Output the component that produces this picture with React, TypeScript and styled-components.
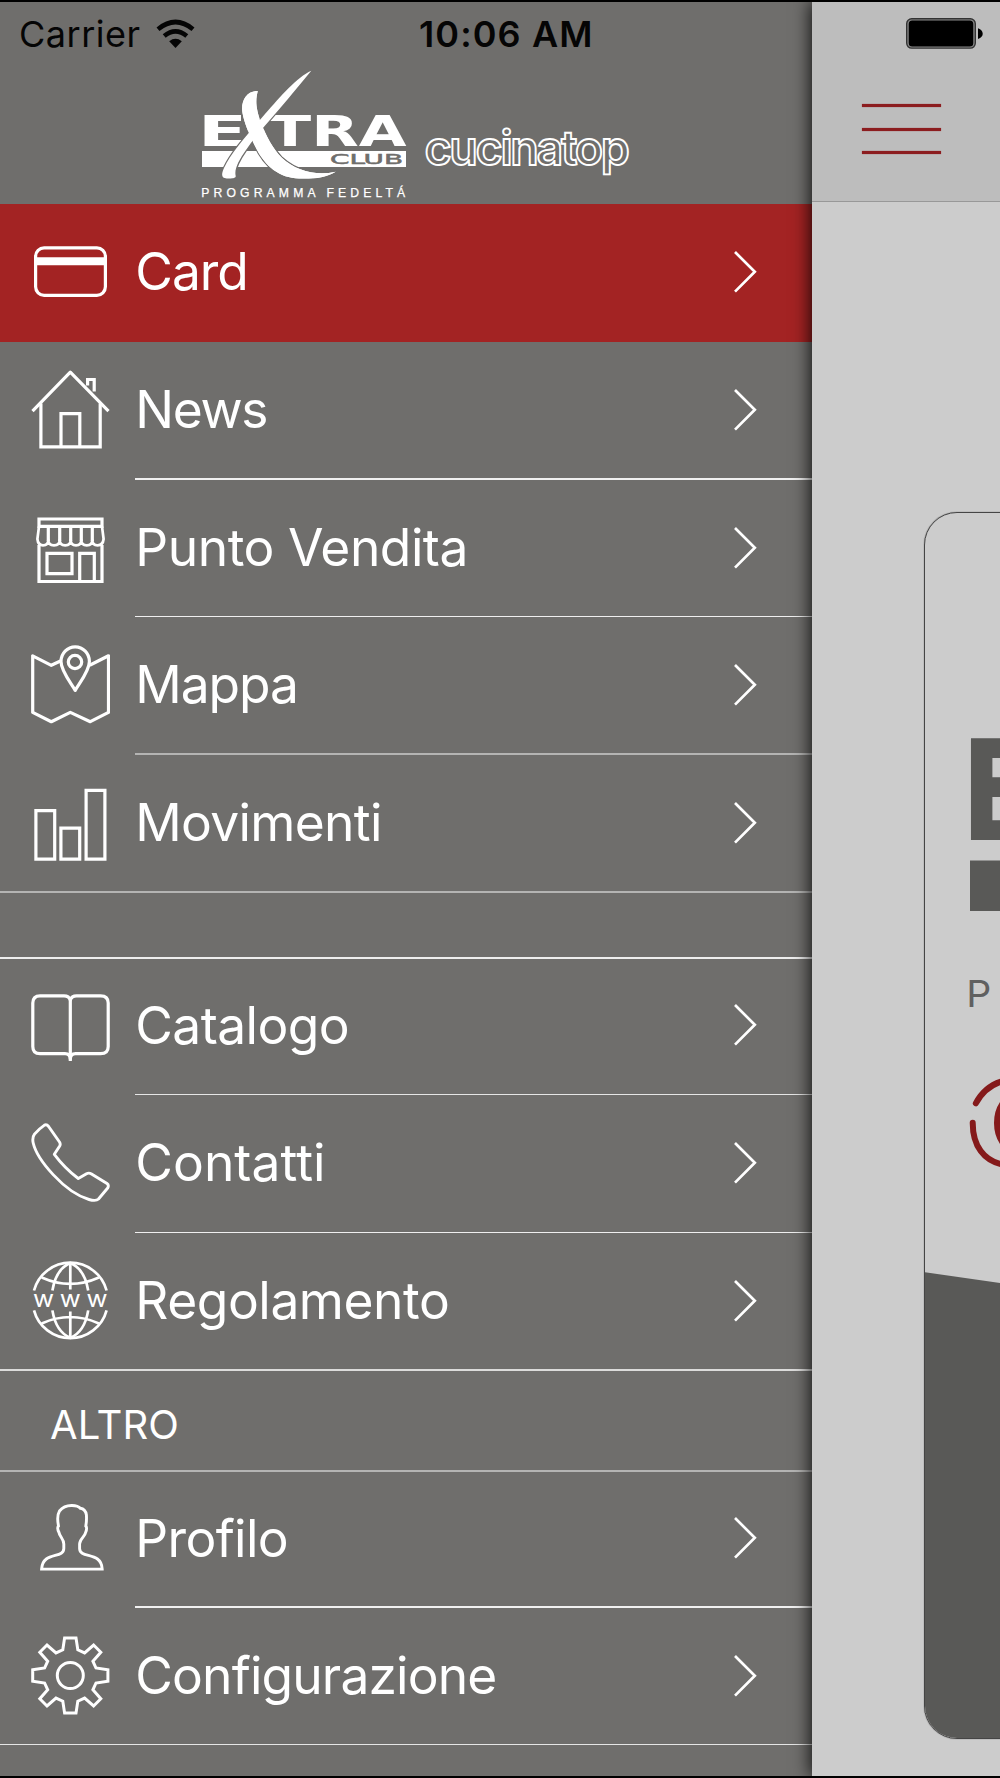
import React from "react";
import styled, { createGlobalStyle } from "styled-components";

const GREY = "#6f6e6c";
const FONT = `Inter, "Liberation Sans", sans-serif`;

const GlobalStyle = createGlobalStyle`
  body { margin: 0; background: #000; }
  #root { height: 1778px; }
  * { box-sizing: border-box; }
`;

const Screen = styled.main`
  display: flex;
  width: 1000px;
  height: 1778px;
  padding: 2px 0 2px;
  overflow: hidden;
  background: #000;
  font-family: ${FONT};
`;

const Drawer = styled.nav`
  display: flex;
  flex-direction: column;
  flex: 0 0 812px;
  background: ${GREY};
  color: #fff;
`;

const DrawerHeader = styled.header`
  display: flex;
  flex-direction: column;
  height: 202px;
`;

const StatusBar = styled.div`
  display: flex;
  align-items: center;
  height: 64px;
  padding-left: 19px;
  color: #050505;
`;

const Carrier = styled.span`
  width: 137px;
  font-size: 36px;
  line-height: 64px;
  letter-spacing: 0.5px;
  white-space: nowrap;
`;

const Clock = styled.span`
  margin-left: 223px;
  font-size: 36px;
  font-weight: 600;
  line-height: 64px;
  letter-spacing: 1.1px;
  white-space: nowrap;
`;

const Brands = styled.div`
  display: flex;
  gap: 12px;
  padding: 2px 0 0 198px;
`;

const Row = styled.a<{ $height: number; $lead?: boolean; $active?: boolean }>`
  display: flex;
  flex-direction: column;
  justify-content: space-between;
  flex: 0 0 ${(p) => p.$height}px;
  padding-top: ${(p) => (p.$lead ? 26.5 : 28)}px;
  background: ${(p) => (p.$active ? "#a32323" : "transparent")};
`;

const RowContent = styled.div`
  display: flex;
  align-items: center;
  height: 80px;
  padding: 0 52px 0 30px;
`;

const Icon = styled.svg`
  flex: none;
  width: 80px;
  height: 80px;
  margin-right: 25.3px;
  fill: none;
  stroke: #fff;
  stroke-width: 3.2;
  stroke-linejoin: round;
`;

const Chevron = styled.svg`
  flex: none;
  width: 28px;
  height: 45px;
  padding-bottom: 1px;
  fill: none;
  stroke: #fff;
  stroke-width: 2.7;
`;

const Label = styled.span<{ $tracking: number }>`
  flex: 1;
  padding-bottom: 2px;
  font-size: 51.5px;
  line-height: 80px;
  letter-spacing: ${(p) => p.$tracking}px;
  white-space: nowrap;
`;

const Rule = styled.div<{ $weight: number; $tone: string; $inset?: boolean }>`
  height: ${(p) => p.$weight}px;
  margin-left: ${(p) => (p.$inset ? 134.5 : 0)}px;
  background: ${(p) => p.$tone};
`;

const Spacer = styled.div`
  display: flex;
  flex-direction: column;
  justify-content: flex-end;
  flex: 0 0 66px;
`;

const Section = styled.div`
  display: flex;
  flex-direction: column;
  justify-content: space-between;
  flex: 0 0 101px;
`;

const SectionTitle = styled.h2`
  margin: 0;
  padding: 14px 0 0 50px;
  font-size: 40px;
  font-weight: 400;
  line-height: 80px;
  letter-spacing: 0.1px;
`;

const Page = styled.section`
  display: flex;
  flex-direction: column;
  flex: 0 0 188px;
  min-width: 0;
  z-index: 1;
  overflow: hidden;
  background: #ccc;
  box-shadow: -2px 0 16px rgba(0, 0, 0, 0.82);
`;

const PageHeader = styled.header`
  display: flex;
  flex-direction: column;
  gap: 54px;
  flex: 0 0 200px;
  padding: 15px 0 0 50px;
  background: #bdbdbd;
  border-bottom: 1px solid #989898;
`;

const Battery = styled.svg`
  margin-left: 43px;
  width: 80px;
  height: 33px;
`;

const Burger = styled.button`
  display: flex;
  flex-direction: column;
  gap: 20.5px;
  width: 78.5px;
  padding: 0;
  border: 0;
  background: none;
`;

const BurgerLine = styled.span`
  height: 3px;
  background: #8c1d1f;
  box-shadow: 0 0 1px #8c1d1f;
`;

const LoyaltyCard = styled.article`
  width: 760px;
  height: 1227px;
  margin: 310px 0 0 112px;
  overflow: hidden;
  border: 1px solid #454545;
  border-radius: 33px;
  box-shadow: 0 0 1px #333;
`;

const CardArt = styled.svg`
  display: block;
  width: 760px;
  height: 1227px;
`;

const quarter = [
  [-37.6, -5.7], [-25.7, -7.5], [-22.6, -14.3], [-30.5, -23.3],
  [-23.3, -30.5], [-14.3, -22.6], [-7.5, -25.7], [-5.7, -37.6],
];
const gearPoints = [0, 1, 2, 3]
  .flatMap((turn) =>
    quarter.map(([x, y]) => {
      let a = x;
      let b = y;
      for (let i = 0; i < turn; i++) [a, b] = [-b, a];
      return `${40.3 + a},${39.5 + b}`;
    })
  )
  .join(" ");

const icons: Record<string, React.ReactNode> = {
  card: (
    <>
      <rect x="5.6" y="15.9" width="69.8" height="47.4" rx="8.5" />
      <path d="M6 29.2H75" strokeWidth="8" />
    </>
  ),
  house: (
    <>
      <path d="M2.5 41.2L40.3 2.1L78.5 41.2" />
      <path d="M10.9 33.5V76.8H70.2V33.5M31 76.8V43.7H49.8V76.8" strokeLinejoin="miter" />
      <path d="M57.6 15.5V9.5H64.2V21.5" strokeLinejoin="miter" />
    </>
  ),
  store: (
    <>
      <path d="M9 37V73.5H72V37M9 20V11H72V20M9 18.3H72" strokeLinejoin="miter" />
      <path d="M9 18.5L7.4 31Q8 37.3 13 37.3Q18.3 37.3 18.3 32Q18.3 37.3 24 37.3Q29.7 37.3 29.7 32Q29.7 37.3 35.2 37.3Q40.7 37.3 40.7 32Q40.7 37.3 46 37.3Q51.3 37.3 51.3 32Q51.3 37.3 56.8 37.3Q62.3 37.3 62.3 32Q62.3 37.3 67.6 37.3Q73 37.3 73.6 31L72 18.5" strokeWidth="2.7" />
      <path d="M18.3 18V33M29.7 18V33M40.7 18V33M51.3 18V33M62.3 18V33" />
      <path d="M17 45.3H42V65.6H17ZM49.7 73V45.3H64.3V73" strokeLinejoin="miter" />
    </>
  ),
  map: (
    <>
      <path d="M31 15.7L21.3 20.3L2.7 10.8V67.4L21.3 76.7L40.3 67.4L60.3 76.7L78.5 67.4V10.8L59.7 20.3" />
      <path d="M45.2 45.4C41 38 31 26 31 16.5A14.2 14.6 0 0 1 59.4 16.5C59.4 26 49.5 38 45.2 45.4Z" />
      <circle cx="45" cy="17" r="6.7" />
    </>
  ),
  bars: (
    <path
      d="M5.9 27.7H24.7V76.1H5.9ZM30.9 45.1H49.7V76.1H30.9ZM56.1 7.3H74.9V76.1H56.1Z"
      strokeLinejoin="miter"
    />
  ),
  book: (
    <>
      <path d="M40.3 14Q39 9.8 34 9.8H10Q2.8 9.8 2.8 17V60.4Q2.8 67.6 10 67.6H35Q40.3 67.6 40.3 73Q40.3 67.6 45.6 67.6H70.6Q78.2 67.6 78.2 60.4V17Q78.2 9.8 70.6 9.8H46.6Q41.6 9.8 40.3 14Z" />
      <path d="M40.3 12V75" />
    </>
  ),
  phone: (
    <path d="M14.5 2.1Q16.6 1 18.6 3.5L29.5 19Q30.8 21 29.7 23L24.3 31.3Q34.5 45 48.3 55.5L56.5 50.7Q59 49.4 61.5 51L77 60.5Q79.2 62 77.7 65L68.5 76Q66 78.5 59 76.5C34 69 7 36.5 3.2 20Q2 14.5 4.5 11.2Q8.5 6.2 14.5 2.1Z" strokeWidth="2.9" />
  ),
  globe: (
    <>
      <path d="M4 29.5A37.6 37.6 0 0 1 76.6 29.5M4 49.3A37.6 37.6 0 0 0 76.6 49.3" strokeWidth="2.7" />
      <path d="M22.4 29.5Q26 8 40.3 2Q54.6 8 58.2 29.5M22.4 49.4Q26 71 40.3 76.8Q54.6 71 58.2 49.4" strokeWidth="2.7" />
      <path d="M40.3 2V28.5M40.3 50.4V77M11.7 16.4Q40.3 29.2 68.9 16.4M11.7 62.4Q40.3 49.6 68.9 62.4" strokeWidth="2.7" />
      {[13.6, 40.3, 67].map((x) => (
        <text key={x} x={x - 10.5} y="46" textLength="21" lengthAdjust="spacingAndGlyphs" fill="#fff" stroke="none" fontSize="23.5" fontWeight="400">w</text>
      ))}
    </>
  ),
  person: (
    <path d="M11.6 70.1C12.5 52 33.8 60 33.8 49.5V45C33.8 40 29.5 37.5 29 33.5Q26.7 29 28.5 27Q26.5 17 29.5 12Q34 6.3 42 6.5Q48 6.6 50.3 9.3Q55.5 10 56.4 16Q56.8 22 55.8 27Q57.5 29 55.6 33.5C55 37.5 49.6 40 49.6 45V49.5C49.6 60 71.5 52 72.2 70.1Z" strokeLinejoin="miter" strokeWidth="2.9" />
  ),
  gear: (
    <>
      <polygon points={gearPoints} strokeLinejoin="miter" strokeWidth="3" />
      <circle cx="40.3" cy="39.5" r="13" strokeWidth="3" />
    </>
  ),
};

type Item = {
  icon: string;
  label: string;
  height: number;
  tracking: number;
  weight: number;
  tone?: string;
  full?: boolean;
  lead?: boolean;
  active?: boolean;
};

const mainItems: Item[] = [
  { icon: "card", label: "Card", height: 138, tracking: -1, weight: 0, active: true },
  { icon: "house", label: "News", height: 138, tracking: -1.4, weight: 2, tone: "#f0f0f0" },
  { icon: "store", label: "Punto Vendita", height: 137, tracking: -0.48, weight: 1, tone: "#efefef" },
  { icon: "map", label: "Mappa", height: 138, tracking: -1.1, weight: 2, tone: "#b4b4b3" },
  { icon: "bars", label: "Movimenti", height: 138, tracking: -0.7, weight: 2, tone: "#b4b4b3", full: true },
];
const infoItems: Item[] = [
  { icon: "book", label: "Catalogo", height: 136, tracking: -0.58, weight: 1, tone: "#e6e6e6", lead: true },
  { icon: "phone", label: "Contatti", height: 138, tracking: 0.05, weight: 1, tone: "#efefef" },
  { icon: "globe", label: "Regolamento", height: 138, tracking: -0.45, weight: 2, tone: "#dcdcdb", full: true },
];
const otherItems: Item[] = [
  { icon: "person", label: "Profilo", height: 136, tracking: -0.65, weight: 2, tone: "#f0f0f0", lead: true },
  { icon: "gear", label: "Configurazione", height: 137, tracking: -0.85, weight: 1, tone: "#e6e6e6", full: true },
];

const MenuRow = ({ item }: { item: Item }) => (
  <Row $height={item.height} $lead={item.lead} $active={item.active}>
    <RowContent>
      <Icon viewBox="0 0 80 80">{icons[item.icon]}</Icon>
      <Label $tracking={item.tracking}>{item.label}</Label>
      <Chevron viewBox="0 0 28 44">
        <path d="M3 2L22.8 21.8L3 41.6" />
      </Chevron>
    </RowContent>
    {item.weight > 0 && <Rule $weight={item.weight} $tone={item.tone ?? "#fff"} $inset={!item.full} />}
  </Row>
);

const Wifi = () => (
  <svg width="40" height="30" viewBox="0 0 40 30" fill="none" stroke="#050505" strokeWidth="4.6">
    <path d="M2 10.2Q19.5 -4.2 37 10.2M8.2 17Q19.5 7.6 30.8 17" />
    <path d="M13.2 22.2Q19.5 17.4 25.8 22.2L19.5 29Z" fill="#050505" stroke="none" />
  </svg>
);

const ExtraLogo = () => (
  <svg width="212" height="134" viewBox="198 68 212 134" fill="#fff">
    <g fontFamily="DejaVu Sans" fontWeight="700" fontSize="43">
      <text x="198" y="145.7" textLength="49" lengthAdjust="spacingAndGlyphs">E</text>
      <text x="269" y="145.7" textLength="137.5" lengthAdjust="spacingAndGlyphs">TRA</text>
    </g>
    <rect x="202" y="151" width="204" height="16" />
    <text x="330" y="164.4" textLength="73" lengthAdjust="spacingAndGlyphs" fill={GREY} stroke={GREY} strokeWidth="0.5" fontFamily="DejaVu Sans" fontSize="14">CLUB</text>
    <g stroke={GREY} strokeWidth="2.4" paintOrder="stroke">
      <path d="M257.7 91C246 91 240.5 102 242.5 113C244 122 249 134 255 146C265 167 280 178 299 178.5C312 179 326 178 335.7 171.7C316 176 296 171 282 158C273 149 266 136 260 120C255 105 256 99 257.7 91Z" />
      <path d="M311.3 70.7C297 77 281 96 265 114C248 134 232 151 224 168C220 177 223 178.5 228 178.6C232 178.6 236 178 235.7 176C234 169 239 160 246 150C259 131 281 108 292 94Q302 82 311.3 70.7Z" />
    </g>
    <path d="M257.7 91C246 91 240.5 102 242.5 113C244 122 249 134 255 146C265 167 280 178 299 178.5C312 179 326 178 335.7 171.7C316 176 296 171 282 158C273 149 266 136 260 120C255 105 256 99 257.7 91Z" />
    <text x="201.3" y="196.6" fontFamily="Liberation Sans" fontSize="12.2" stroke="#fff" strokeWidth="0.25" letterSpacing="3.6" textLength="207.5">PROGRAMMA FEDELTÁ</text>
  </svg>
);

const CucinaLogo = () => (
  <svg width="212" height="134" viewBox="422 68 212 134">
    <text x="424.5" y="164.5" textLength="203" lengthAdjust="spacingAndGlyphs" letterSpacing="-2.4" fill="none" stroke="#fff" strokeWidth="1.9" fontFamily={FONT} fontSize="48" fontWeight="600">cucinatop</text>
  </svg>
);

export default function App() {
  return (
    <>
      <GlobalStyle />
      <Screen>
        <Drawer>
          <DrawerHeader>
            <StatusBar>
              <Carrier>Carrier</Carrier>
              <Wifi />
              <Clock>10:06 AM</Clock>
            </StatusBar>
            <Brands>
              <ExtraLogo />
              <CucinaLogo />
            </Brands>
          </DrawerHeader>
          {mainItems.map((item) => <MenuRow key={item.label} item={item} />)}
          <Spacer>
            <Rule $weight={2} $tone="#eee" />
          </Spacer>
          {infoItems.map((item) => <MenuRow key={item.label} item={item} />)}
          <Section>
            <SectionTitle>ALTRO</SectionTitle>
            <Rule $weight={2} $tone="#b4b4b3" />
          </Section>
          {otherItems.map((item) => <MenuRow key={item.label} item={item} />)}
        </Drawer>
        <Page>
          <PageHeader>
            <Battery viewBox="905 17 80 33">
              <rect x="906.7" y="18.7" width="68.6" height="29.4" rx="5" fill="#8a8a8a" stroke="#333" strokeWidth="1.4" />
              <rect x="908.7" y="20.4" width="64.6" height="26" rx="3.5" fill="#000" />
              <path d="M978 28.3Q982.7 30 982.7 33.7Q982.7 37.3 978 39Z" fill="#000" />
            </Battery>
            <Burger aria-label="Menu">
              <BurgerLine />
              <BurgerLine />
              <BurgerLine />
            </Burger>
          </PageHeader>
          <LoyaltyCard>
            <CardArt viewBox="925 513 760 1227">
              <text transform="translate(960.4 840) scale(.82 1)" fontFamily="DejaVu Sans" fontWeight="700" fontSize="139" fill="#595957">E</text>
              <rect x="970" y="860.5" width="600" height="50.5" fill="#595957" />
              <text transform="translate(966.3 1007) scale(1.06 1)" fontFamily={FONT} fontSize="37" fill="#606060">P</text>
              <g fill="none" stroke="#851a1b" strokeWidth="6" strokeLinecap="round">
                <path d="M975.8 1103.3Q985 1086 1003 1081" />
                <path d="M972.7 1122.7C972.7 1146 984 1161 1003 1164.5" />
                <ellipse cx="1016" cy="1123" rx="18.5" ry="27" strokeWidth="7" />
              </g>
              <path d="M924 1272L1686 1382V1742H924Z" fill="#595957" />
            </CardArt>
          </LoyaltyCard>
        </Page>
      </Screen>
    </>
  );
}
